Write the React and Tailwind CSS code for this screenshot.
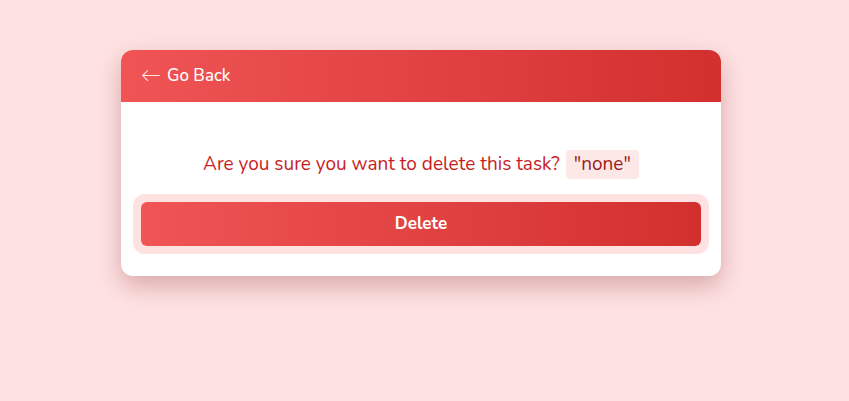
import React from 'react';

const App = () => {
  return (
    <div className="min-h-screen w-full bg-[#fee2e2] pt-[50px] font-['Nunito','Lato','Noto_Sans',sans-serif]">
      <div className="ml-[121px] w-[600px] rounded-xl bg-white shadow-[0_10px_24px_rgba(150,60,70,0.35)] overflow-hidden">
        <div className="h-[52px] flex items-center px-5 bg-gradient-to-r from-[#f05454] to-[#d32f2f]">
          <button className="text-white text-[17px] font-medium flex items-center gap-1.5">
            <span className="text-[20px] leading-none font-light">&larr;</span>
            <span>Go Back</span>
          </button>
        </div>
        <div className="px-3 pt-[48px] pb-[22px]">
          <p className="text-center text-[19px] text-[#c81e1e] flex items-center justify-center gap-1.5">
            <span>Are you sure you want to delete this task?</span>
            <span className="bg-[#fde8e8] text-[#9b1c1c] rounded px-2 py-0">"none"</span>
          </p>
          <div className="mt-[15px] rounded-xl bg-[#fee2e2] p-2">
            <button className="w-full h-[44px] rounded-md bg-gradient-to-r from-[#f05454] to-[#d32f2f] text-white font-bold text-[17px]">
              Delete
            </button>
          </div>
        </div>
      </div>
    </div>
  );
};

export default App;
